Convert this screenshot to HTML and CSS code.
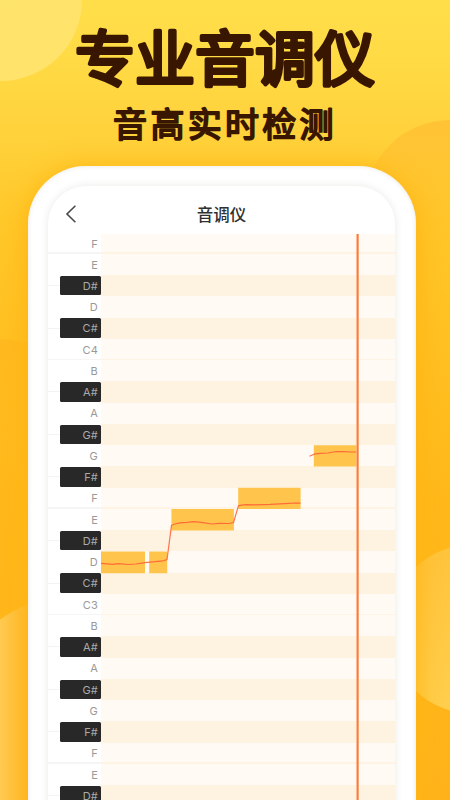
FILE: index.html
```html
<!DOCTYPE html>
<html lang="zh-CN">
<head>
<meta charset="utf-8">
<title>专业音调仪</title>
<link rel="stylesheet" href="styles.css">
</head>
<body>
<main class="poster">
  <svg class="backdrop" viewBox="0 0 450 800" aria-hidden="true">
    <defs>
      <linearGradient id="glowA" x1="0" y1="0" x2="1" y2="1"><stop offset="0" stop-color="#ffe66f"/><stop offset="1" stop-color="#ffe269"/></linearGradient>
      <linearGradient id="glowB" x1="0" y1="0" x2="0" y2="1"><stop offset="0" stop-color="#ffc335"/><stop offset="1" stop-color="#ffc022" stop-opacity="0"/></linearGradient>
      <linearGradient id="glowC" x1="0" y1="0" x2="0" y2="1"><stop offset="0" stop-color="#ffc33c"/><stop offset="1" stop-color="#ffcf4e"/></linearGradient>
      <linearGradient id="glowD" gradientUnits="userSpaceOnUse" x1="0" y1="0" x2="32" y2="0"><stop offset="0" stop-color="#ffca52"/><stop offset="1" stop-color="#ffb729"/></linearGradient>
      <linearGradient id="glowE" x1="0" y1="0" x2="0" y2="1"><stop offset="0" stop-color="#ffb91f"/><stop offset="1" stop-color="#ffb81a" stop-opacity="0"/></linearGradient>
    </defs>
    <circle cx="1" cy="0" r="81" fill="url(#glowA)"/>
    <circle cx="450" cy="205" r="85" fill="url(#glowB)"/>
    <circle cx="0" cy="440" r="101" fill="url(#glowE)"/>
    <ellipse cx="70" cy="800" rx="150" ry="204" fill="url(#glowD)"/>
    <circle cx="474" cy="629" r="85" fill="url(#glowC)"/>
  </svg>

  <header class="headline">
    <svg class="headline-art" viewBox="0 0 450 150" role="img">
      <text class="title" x="225" y="80.5">专业音调仪</text>
      <text class="subtitle" x="225" y="136.5">音高实时检测</text>
    </svg>
  </header>

  <section class="phone">
    <div class="screen">
      <div class="navbar">
        <svg class="back" viewBox="0 0 12 20"><path d="M10.4 1.8 2 10l8.4 8.2"/></svg>
        <h1 class="nav-title">音调仪</h1>
      </div>
      <div class="roll">
        <div class="row octave first"><span class="key">F</span></div>
        <div class="row"><span class="key">E</span></div>
        <div class="row sharp"><span class="key">D#</span></div>
        <div class="row"><span class="key">D</span></div>
        <div class="row sharp"><span class="key">C#</span></div>
        <div class="row octave"><span class="key">C4</span></div>
        <div class="row"><span class="key">B</span></div>
        <div class="row sharp"><span class="key">A#</span></div>
        <div class="row"><span class="key">A</span></div>
        <div class="row sharp"><span class="key">G#</span></div>
        <div class="row"><span class="key">G</span></div>
        <div class="row sharp"><span class="key">F#</span></div>
        <div class="row octave"><span class="key">F</span></div>
        <div class="row"><span class="key">E</span></div>
        <div class="row sharp"><span class="key">D#</span></div>
        <div class="row"><span class="key">D</span></div>
        <div class="row sharp"><span class="key">C#</span></div>
        <div class="row octave"><span class="key">C3</span></div>
        <div class="row"><span class="key">B</span></div>
        <div class="row sharp"><span class="key">A#</span></div>
        <div class="row"><span class="key">A</span></div>
        <div class="row sharp"><span class="key">G#</span></div>
        <div class="row"><span class="key">G</span></div>
        <div class="row sharp"><span class="key">F#</span></div>
        <div class="row octave"><span class="key">F</span></div>
        <div class="row"><span class="key">E</span></div>
        <div class="row sharp"><span class="key">D#</span></div>
        <svg class="pitch" viewBox="101 234 294 566">
          <g class="notes">
            <path d="M101 551.6h44v21.6h-44zM149.2 551.6h18v21.6h-18zM171.4 509.1h62.5v21.4h-62.5zM238.2 487.8h62.4v21.3h-62.4zM313.8 445.2h43.6v21.4h-43.6z"/>
          </g>
          <path class="curve" d="M101 563.3L107 563.8 113 564.3 118 563.7 128 564.5 136 564 145 562.6 155 561.7 163 560.8 167 559.6 171.5 525.3 175 524 180 522.9 187 522.4 194 521.7 201 522.4 212 524 219 523.4 229 523.5 233.5 522.5 238.5 505.6 246 504.6 256 504.8 270 504.4 285 503.6 295 503 300.6 503.2"/>
          <path class="curve" d="M309.5 456.3L314 454.2 320 453.3 328 453 336 451.5 344 451.6 350 452 357 452"/>
          <path class="playhead-glow" d="M357.6 234V800"/>
          <path class="playhead" d="M357.6 234V800"/>
        </svg>
      </div>
    </div>
  </section>
</main>
</body>
</html>
```

FILE: styles.css
```css
* { box-sizing: border-box; }

body {
  margin: 0;
  width: 450px;
  height: 800px;
  overflow: hidden;
  font-family: Inter, "Noto Sans CJK SC", sans-serif;
}

.poster {
  position: relative;
  height: 800px;
  overflow: hidden;
  display: flex;
  flex-direction: column;
  align-items: center;
  background: linear-gradient(#ffde4a 0, #ffdc46 45px, #ffd23c 130px, #ffc82a 220px, #ffc123 320px, #ffb81a 500px, #ffb31b 800px);
}

.backdrop {
  position: absolute;
  inset: 0;
  width: 450px;
  height: 800px;
}

.headline {
  position: relative;
  flex: none;
  height: 166px;
}

.headline-art {
  display: block;
  width: 450px;
  height: 150px;
}

.title,
.subtitle {
  font-family: "Noto Sans CJK SC", sans-serif;
  font-weight: 400;
  text-anchor: middle;
  fill: #381600;
  stroke: #381600;
  stroke-linejoin: round;
  stroke-linecap: round;
}

.title {
  font-size: 60px;
  stroke-width: 4px;
}

.subtitle {
  font-size: 34px;
  letter-spacing: 3.3px;
  stroke-width: 1.9px;
}

.phone {
  position: relative;
  flex: none;
  width: 388px;
  height: 700px;
  margin-right: 6px;
  padding: 20px 21px 0 20px;
  border-radius: 58px 58px 0 0;
  background: #fff;
  box-shadow: 0 4px 26px 2px #ffb513, inset 0 0 5px #e9e7e2;
}

.screen {
  height: 680px;
  overflow: hidden;
  border-radius: 38px 38px 0 0;
  background: #fff;
  box-shadow: 0 0 9px #e9e9e7;
}

.navbar {
  display: flex;
  align-items: center;
  height: 48px;
  padding: 8px 17px 0;
}

.back {
  width: 12px;
  height: 20px;
  fill: none;
  stroke: #484848;
  stroke-width: 1.6;
}

.nav-title {
  flex: 1;
  margin: 2px 12px 0 0;
  text-align: center;
  font-size: 16.5px;
  line-height: 20px;
  font-weight: 500;
  color: #303030;
}

.roll {
  position: relative;
  width: 347px;
}

.row {
  position: relative;
  display: flex;
  align-items: center;
  height: 21.25px;
  padding-left: 12px;
  background: linear-gradient(90deg, #fff 53px, #fffbf4 53px);
}

.row.first {
  height: 19.75px;
}

.row.sharp {
  background:
    linear-gradient(#f3f3f3, #f3f3f3) 0 50% / 12px 1px no-repeat,
    linear-gradient(90deg, #fff 53px, #fdf3e0 53px);
}

.row.octave::after {
  content: "";
  position: absolute;
  left: 0;
  right: 0;
  bottom: 0;
  height: 1.5px;
  background: linear-gradient(90deg, #f5f5f5 53px, #fff3e3 53px);
}

.key {
  width: 41px;
  height: 19.5px;
  padding-right: 3px;
  text-align: right;
  font-size: 11px;
  line-height: 20.5px;
  letter-spacing: 0.2px;
  color: #999;
}

.sharp .key {
  border-radius: 1.5px;
  background: #282828;
  color: #aaa;
}

.pitch {
  position: absolute;
  left: 53px;
  top: 0;
  width: 294px;
  height: 566px;
}

.notes { fill: #ffc44c; }

.curve {
  fill: none;
  stroke: #ff5c35;
  stroke-width: 1.2;
  stroke-linejoin: round;
  opacity: 0.85;
}

.playhead-glow {
  stroke: #ffad7f;
  stroke-width: 2.8;
}

.playhead {
  stroke: #f47a48;
  stroke-width: 1.2;
}
```
